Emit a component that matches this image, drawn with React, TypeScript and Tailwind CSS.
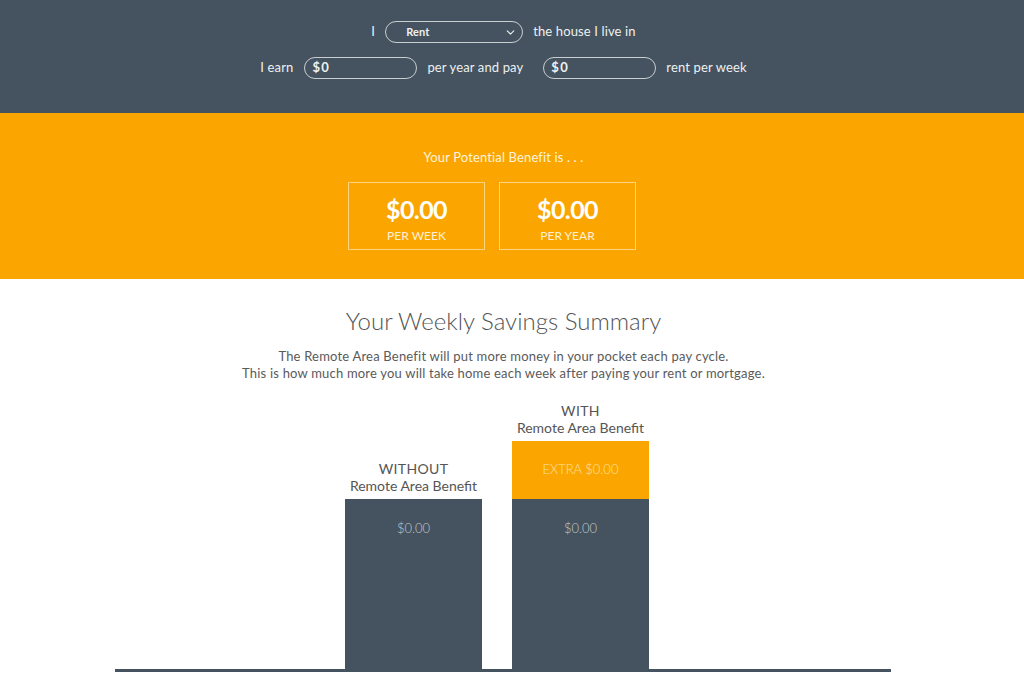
import { ChevronDown } from "lucide-react";

function Bar({
  label,
  extra,
}: {
  label: string;
  extra?: boolean;
}) {
  return (
    <div className="flex w-[137px] flex-col items-center">
      <div className="mb-[5px] text-center text-[14px] leading-[17px] text-[#555]">
        <div className="tracking-wide">{label}</div>
        <div>Remote Area Benefit</div>
      </div>
      {extra && (
        <div className="flex h-[58px] w-full items-center justify-center bg-[#fba600] text-[13px] font-light text-[#fde0a4]">
          EXTRA $0.00
        </div>
      )}
      <div className="h-[170px] w-full bg-[#44535f] pt-[20px] text-center text-[13px] font-light text-[#c4c9cd]">
        $0.00
      </div>
    </div>
  );
}

export default function App() {
  return (
    <div className="min-h-[681px] bg-white font-['Lato','Open_Sans',sans-serif]">
      {/* Inputs */}
      <div className="h-[113px] bg-[#44535f] pt-[21px] text-[13px] tracking-[0.01em] text-[#eef0f1]">
        <div className="flex w-[1007px] flex-col items-center">
          <div className="flex h-[22px] items-center">
            <span className="mr-[10px]">I</span>
            <div className="flex h-[22px] w-[138px] items-center justify-between rounded-full border border-[#c9ced2] pl-[20px] pr-[5px]">
              <span className="text-[11px] font-bold">Rent</span>
              <ChevronDown className="h-[13px] w-[13px]" strokeWidth={2} />
            </div>
            <span className="ml-[10px]">the house I live in</span>
          </div>
          <div className="mt-[14px] flex h-[22px] items-center">
            <span>I earn</span>
            <div className="ml-[11px] flex h-[22px] w-[113px] items-center rounded-full border border-[#c9ced2] pl-[7px] text-[13px] font-bold tracking-[0.1em]">
              $0
            </div>
            <span className="ml-[10px]">per year and pay</span>
            <div className="ml-[20px] flex h-[22px] w-[113px] items-center rounded-full border border-[#c9ced2] pl-[7px] text-[13px] font-bold tracking-[0.1em]">
              $0
            </div>
            <span className="ml-[10px]">rent per week</span>
          </div>
        </div>
      </div>

      {/* Potential benefit */}
      <div className="h-[166px] bg-[#fba600] pt-[36px] text-[#fdf3df]">
        <div className="w-[1007px] text-center text-[13px] leading-[17px] tracking-[0.01em]">
          Your Potential Benefit is . . .
        </div>
        <div className="ml-[348px] mt-[16px] flex gap-[14px]">
          {["PER WEEK", "PER YEAR"].map((p) => (
            <div
              key={p}
              className="flex h-[68px] w-[137px] flex-col items-center border border-[#fdd486] pt-[11px] text-white"
            >
              <div className="text-[25px] font-bold leading-[30px] tracking-tight">$0.00</div>
              <div className="mt-[4px] text-[12px] leading-[15px] text-[#fdf0d6]">{p}</div>
            </div>
          ))}
        </div>
      </div>

      {/* Summary */}
      <div className="flex w-[1007px] flex-col items-center pt-[27px]">
        <h1 className="text-[24px] font-light leading-[30px] text-[#555]">
          Your Weekly Savings Summary
        </h1>
        <p className="mt-[12px] text-center text-[13px] leading-[17px] tracking-[0.015em] text-[#5a5a5a]">
          The Remote Area Benefit will put more money in your pocket each pay cycle.
          <br />
          This is how much more you will take home each week after paying your rent or mortgage.
        </p>
      </div>

      {/* Chart */}
      <div className="ml-[115px] mt-[20px] w-[776px]">
        <div className="flex items-end gap-[30px] border-b-[3px] border-[#44535f] pl-[230px]">
          <Bar label="WITHOUT" />
          <Bar label="WITH" extra />
        </div>
      </div>
    </div>
  );
}
